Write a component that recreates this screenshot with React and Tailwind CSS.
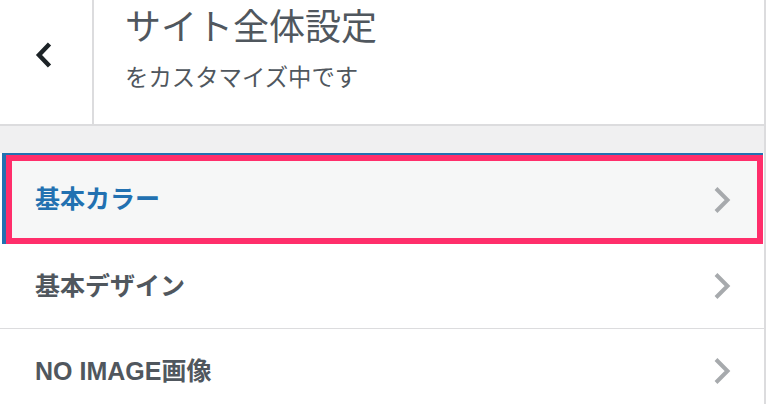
import React from 'react';

const font = { fontFamily: '"Liberation Sans", "Noto Sans CJK JP", sans-serif' };

const ChevronRight = () => (
  <svg width="18" height="28" viewBox="0 0 18 28" className="shrink-0">
    <polyline points="3,2.5 14.5,14 3,25.5" fill="none" stroke="#a7aaad" strokeWidth="4" />
  </svg>
);

const Item = ({ label, active }) => (
  <div className={`flex items-center justify-between ${active ? 'pl-[29px] pr-[32px] h-[89px] bg-[#f6f7f7] text-[#2271b1]' : 'pl-[35px] pr-[33px] h-[84px] bg-white text-[#50575e]'}`}>
    <span className="text-[25px] font-semibold leading-none">{label}</span>
    <ChevronRight />
  </div>
);

export default function App() {
  return (
    <div className="w-[766px] h-[404px] overflow-hidden bg-white border-r-2 border-[#dcdcde] relative" style={font}>
      <header className="flex h-[126px] border-b-2 border-[#dcdcde] bg-white">
        <button className="w-[94px] shrink-0 border-r-2 border-[#dcdcde] flex items-center justify-center pr-[4px] pb-[14px]">
          <svg width="18" height="28" viewBox="0 0 18 28">
            <polyline points="14.5,3 4,14 14.5,25" fill="none" stroke="#1d2327" strokeWidth="4.5" />
          </svg>
        </button>
        <div className="flex flex-col pl-[31px] pt-[8px] text-[#50575e]">
          <h1 className="text-[36px] leading-[40px] font-normal">サイト全体設定</h1>
          <span className="mt-[15px] text-[23.4px] leading-[30px]">をカスタマイズ中です</span>
        </div>
      </header>

      <div className="h-[27px] bg-[#f0f0f1]" />

      <div className="relative ml-[2px] mr-[1px] border-t-2 border-l-4 border-[#2271b1]">
        <Item label="基本カラー" active />
        <div className="absolute left-0 top-0 right-0 bottom-0 border-[6px] border-[#ff2e6b] pointer-events-none" />
      </div>
      <Item label="基本デザイン" />
      <div className="h-[1px] bg-[#dcdcde]" />
      <Item label="NO IMAGE画像" />
    </div>
  );
}
